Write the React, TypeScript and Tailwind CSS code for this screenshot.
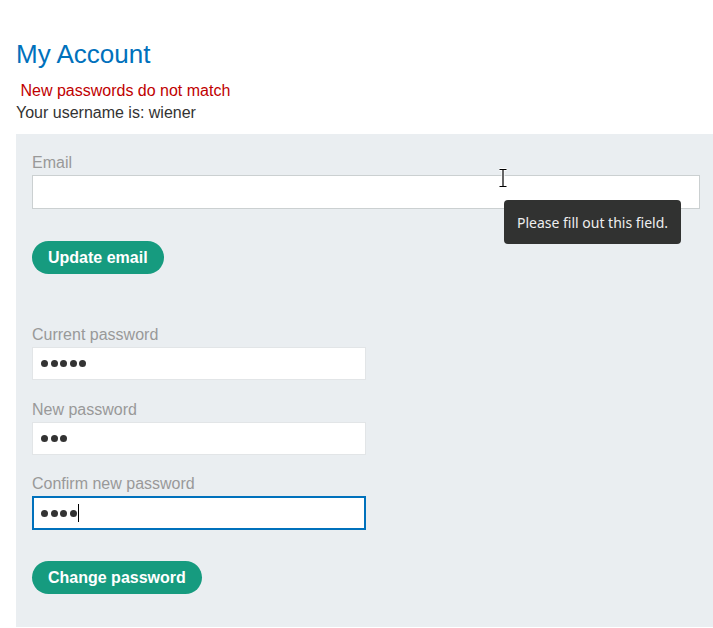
import React from 'react';

const Dots = ({ count }: { count: number }) => (
  <div className="flex items-center gap-[2.6px]">
    {Array.from({ length: count }).map((_, i) => (
      <span key={i} className="block w-[7px] h-[7px] rounded-full bg-[#333333]" />
    ))}
  </div>
);

const PasswordField = ({
  label,
  count,
  focused,
  className,
}: {
  label: string;
  count: number;
  focused?: boolean;
  className?: string;
}) => (
  <div className={className}>
    <label className="block text-[16px] leading-[18px] text-[#999999]">{label}</label>
    {focused ? (
      <div className="mt-[3px] w-1/2 h-[34px] bg-white border-2 border-[#0071bc] flex items-center pl-[7px]">
        <Dots count={count} />
        <span className="block w-px h-[18px] bg-black ml-[1px]" />
      </div>
    ) : (
      <div className="mt-[3px] w-1/2 h-[33px] bg-white border border-[#e2e5e7] flex items-center pl-[8px]">
        <Dots count={count} />
      </div>
    )}
  </div>
);

const IBeam = () => (
  <svg width="10" height="20" viewBox="0 0 10 20" className="absolute left-[498px] top-[168px]">
    <path d="M1.5 1.5h7M5 1.5v17M1.5 18.5h7" stroke="white" strokeWidth="3" fill="none" />
    <path d="M1.5 1.5h7M5 1.5v17M1.5 18.5h7" stroke="black" strokeWidth="1.2" fill="none" />
  </svg>
);

export default function App() {
  return (
    <div
      className="relative w-[713px] h-[628px] overflow-hidden bg-white text-[#333333]"
      style={{ fontFamily: '"Liberation Sans", Arial, sans-serif' }}
    >
      <div className="pl-4 pt-[39px]">
        <h1 className="text-[26px] leading-[31px] text-[#0071bc] font-normal">My Account</h1>
        <p className="mt-[10px] text-[16px] leading-[22px] text-[#c00000]">&nbsp;New passwords do not match</p>
        <p className="text-[16px] leading-[22px]">Your username is: wiener</p>

        <div className="mt-[10px] w-[700px] h-[493px] bg-[#eaeef1] px-4 pt-[20px]">
          <label className="block text-[16px] leading-[18px] text-[#999999]">Email</label>
          <div className="mt-[3px] h-[34px] bg-white border border-[#cbd0d1]" />
          <button className="mt-[32px] h-[33px] px-4 rounded-full bg-[#169b7f] text-white font-bold text-[16px] leading-[33px]">
            Update email
          </button>

          <PasswordField className="mt-[52px]" label="Current password" count={5} />
          <PasswordField className="mt-[21px]" label="New password" count={3} />
          <PasswordField className="mt-[20px]" label="Confirm new password" count={4} focused />

          <button className="mt-[31px] h-[33px] px-4 rounded-full bg-[#169b7f] text-white font-bold text-[16px] leading-[33px]">
            Change password
          </button>
        </div>
      </div>

      <div
        className="absolute left-[504px] top-[200px] w-[177px] h-[44px] rounded-[4px] bg-[#313231] text-[#eeeeee] text-[14px] flex items-center justify-center"
        style={{ fontFamily: '"Noto Sans", "Open Sans", sans-serif' }}
      >
        Please fill out this field.
      </div>
      <IBeam />
    </div>
  );
}
